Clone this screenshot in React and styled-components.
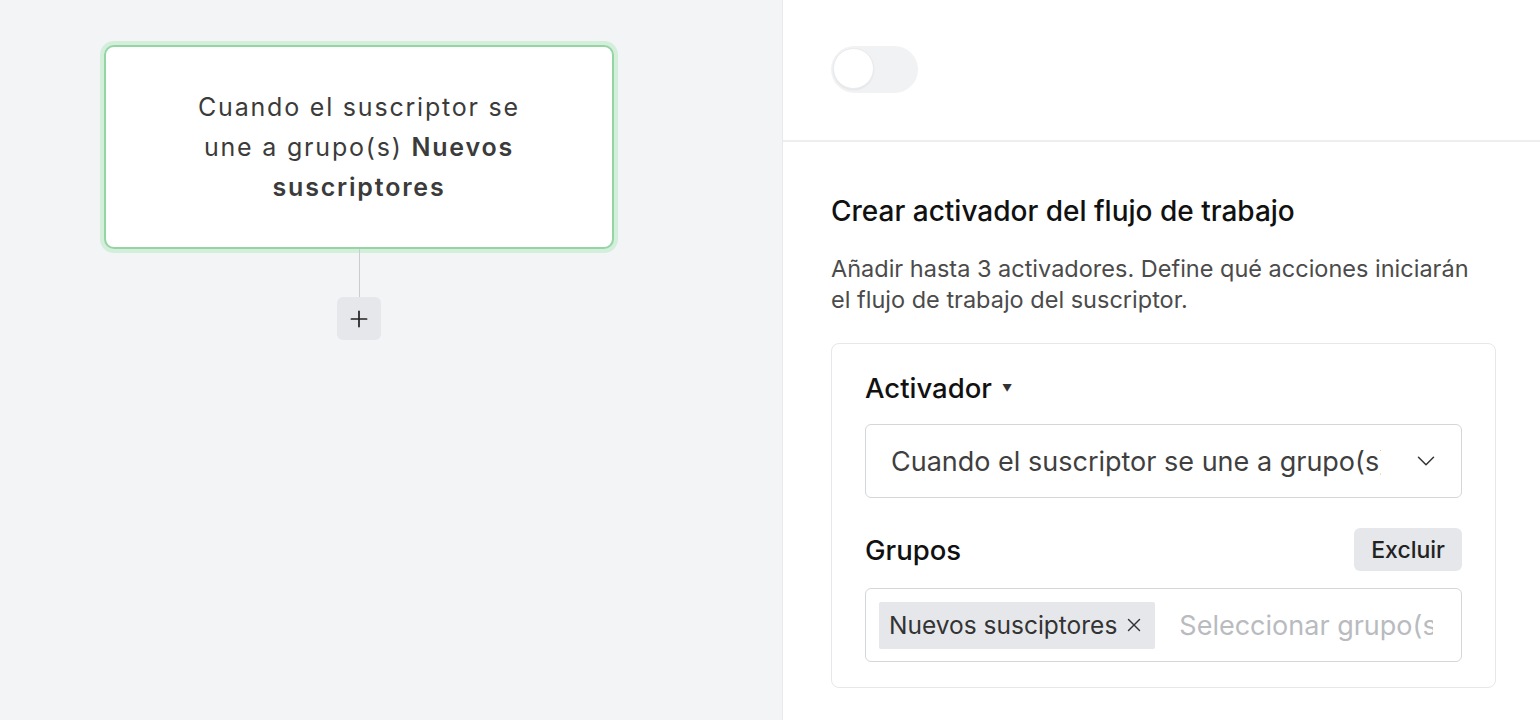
import React from 'react';
import styled, { createGlobalStyle } from 'styled-components';
import { ChevronDown, X, Plus } from 'lucide-react';

const GlobalStyle = createGlobalStyle`
    html, body {
        margin: 0;
        padding: 0;
        font-family: Inter, "Noto Sans", "Liberation Sans", sans-serif;
        color: #111;
    }
`;

function App() {
    return (
        <Page>
            <GlobalStyle />
            <Canvas>
                <NodeColumn>
                    <TriggerNode>
                        <p>Cuando el suscriptor se une a grupo(s) <b>Nuevos suscriptores</b></p>
                    </TriggerNode>
                    <Connector />
                    <AddButton><Plus size={26} strokeWidth={1.6} /></AddButton>
                </NodeColumn>
            </Canvas>

            <Sidebar>
                <TopBar>
                    <Toggle />
                </TopBar>
                <Body>
                    <Heading>Crear activador del flujo de trabajo</Heading>
                    <Description>
                        Añadir hasta 3 activadores. Define qué acciones iniciarán el flujo de trabajo del suscriptor.
                    </Description>

                    <Card>
                        <Label>
                            Activador <Caret>▼</Caret>
                        </Label>
                        <Select>
                            <span>Cuando el suscriptor se une a grupo(s) Nuevos suscriptores</span>
                            <ChevronDown size={30} strokeWidth={1.2} color="#333" />
                        </Select>

                        <LabelRow>
                            <Label>Grupos</Label>
                            <GhostButton>Excluir</GhostButton>
                        </LabelRow>
                        <MultiSelect>
                            <Tag>
                                Nuevos susciptores
                                <X size={22} strokeWidth={1.6} />
                            </Tag>
                            <Placeholder>Seleccionar grupo(s)</Placeholder>
                        </MultiSelect>
                    </Card>
                </Body>
            </Sidebar>
        </Page>
    );
}

export default App;

const Page = styled.div`
    display: flex;
    height: 720px;
    overflow: hidden;
`;

const Canvas = styled.div`
    flex: 0 0 782px;
    background: #f3f4f6;
    padding: 45px 0 0 104px;
    box-sizing: border-box;
`;

const NodeColumn = styled.div`
    width: 510px;
    display: flex;
    flex-direction: column;
    align-items: center;
`;

const TriggerNode = styled.div`
    width: 100%;
    height: 204px;
    box-sizing: border-box;
    background: #fff;
    border: 2px solid #95d5a4;
    box-shadow: 0 0 0 4px #d3eedb;
    border-radius: 10px;
    display: flex;
    align-items: center;
    justify-content: center;
    text-align: center;
    padding: 0 72px;
    font-size: 25px;
    line-height: 40px;
    color: #3b3b3b;
    letter-spacing: 1.8px;

    p {
        margin: 0;
    }

    b {
        font-weight: 600;
    }
`;

const Connector = styled.div`
    width: 1px;
    height: 48px;
    background: #c9ccd1;
`;

const AddButton = styled.button`
    width: 44px;
    height: 43px;
    border: none;
    border-radius: 6px;
    background: #e5e7eb;
    color: #222;
    display: flex;
    align-items: center;
    justify-content: center;
    padding: 0;
    cursor: pointer;
`;

const Sidebar = styled.div`
    flex: 1;
    min-width: 0;
    background: #fff;
    border-left: 1px solid #e8e9ec;
    display: flex;
    flex-direction: column;
`;

const TopBar = styled.div`
    height: 142px;
    box-sizing: border-box;
    border-bottom: 2px solid #eceef0;
    padding: 46px 0 0 48px;
`;

const Toggle = styled.div`
    width: 87px;
    height: 47px;
    border-radius: 24px;
    background: #f1f2f4;
    position: relative;

    &::after {
        content: '';
        position: absolute;
        left: 2px;
        top: 2px;
        width: 41px;
        height: 41px;
        border-radius: 50%;
        background: #fff;
        border: 1px solid #eaebed;
        box-sizing: border-box;
        box-shadow: 0 1px 2px rgba(0, 0, 0, 0.06);
    }
`;

const Body = styled.div`
    padding: 52px 44px 0 48px;
`;

const Heading = styled.h2`
    margin: 0;
    font-size: 28px;
    line-height: 34px;
    font-weight: 500;
    color: #111;
`;

const Description = styled.p`
    margin: 25px 0 28px;
    font-size: 23.5px;
    line-height: 31px;
    color: #4b4b4b;
    max-width: 655px;
`;

const Card = styled.div`
    border: 1px solid #e6e7ea;
    border-radius: 8px;
    padding: 27px 33px 25px;
`;

const Label = styled.div`
    font-size: 27.5px;
    line-height: 34px;
    font-weight: 500;
    color: #111;
    display: flex;
    align-items: center;
    gap: 10px;
`;

const Caret = styled.span`
    font-size: 10px;
    color: #333;
`;

const Select = styled.div`
    margin-top: 19px;
    height: 74px;
    box-sizing: border-box;
    border: 1px solid #d4d6da;
    border-radius: 6px;
    padding: 0 20px 0 25px;
    display: flex;
    align-items: center;
    justify-content: space-between;
    gap: 30px;
    font-size: 27px;
    color: #3f3f3f;

    span {
        flex: 1;
        min-width: 0;
        white-space: nowrap;
        overflow: hidden;
    }

    svg {
        flex-shrink: 0;
    }
`;

const LabelRow = styled.div`
    margin-top: 30px;
    display: flex;
    align-items: center;
    justify-content: space-between;
`;

const GhostButton = styled.button`
    height: 43px;
    padding: 0 17px;
    border: none;
    border-radius: 6px;
    background: #e5e7eb;
    font-family: inherit;
    font-size: 23px;
    font-weight: 500;
    color: #222;
    cursor: pointer;
`;

const MultiSelect = styled.div`
    margin-top: 17px;
    height: 74px;
    box-sizing: border-box;
    border: 1px solid #d4d6da;
    border-radius: 6px;
    padding: 0 28px 0 13px;
    display: flex;
    align-items: center;
    gap: 24px;
    overflow: hidden;
`;

const Tag = styled.div`
    flex-shrink: 0;
    height: 47px;
    padding: 0 10px;
    background: #e5e7eb;
    border-radius: 2px;
    display: flex;
    align-items: center;
    gap: 6px;
    font-size: 24.5px;
    color: #333;
`;

const Placeholder = styled.span`
    flex: 1;
    min-width: 0;
    white-space: nowrap;
    overflow: hidden;
    font-size: 27px;
    color: #b9bbbf;
`;
